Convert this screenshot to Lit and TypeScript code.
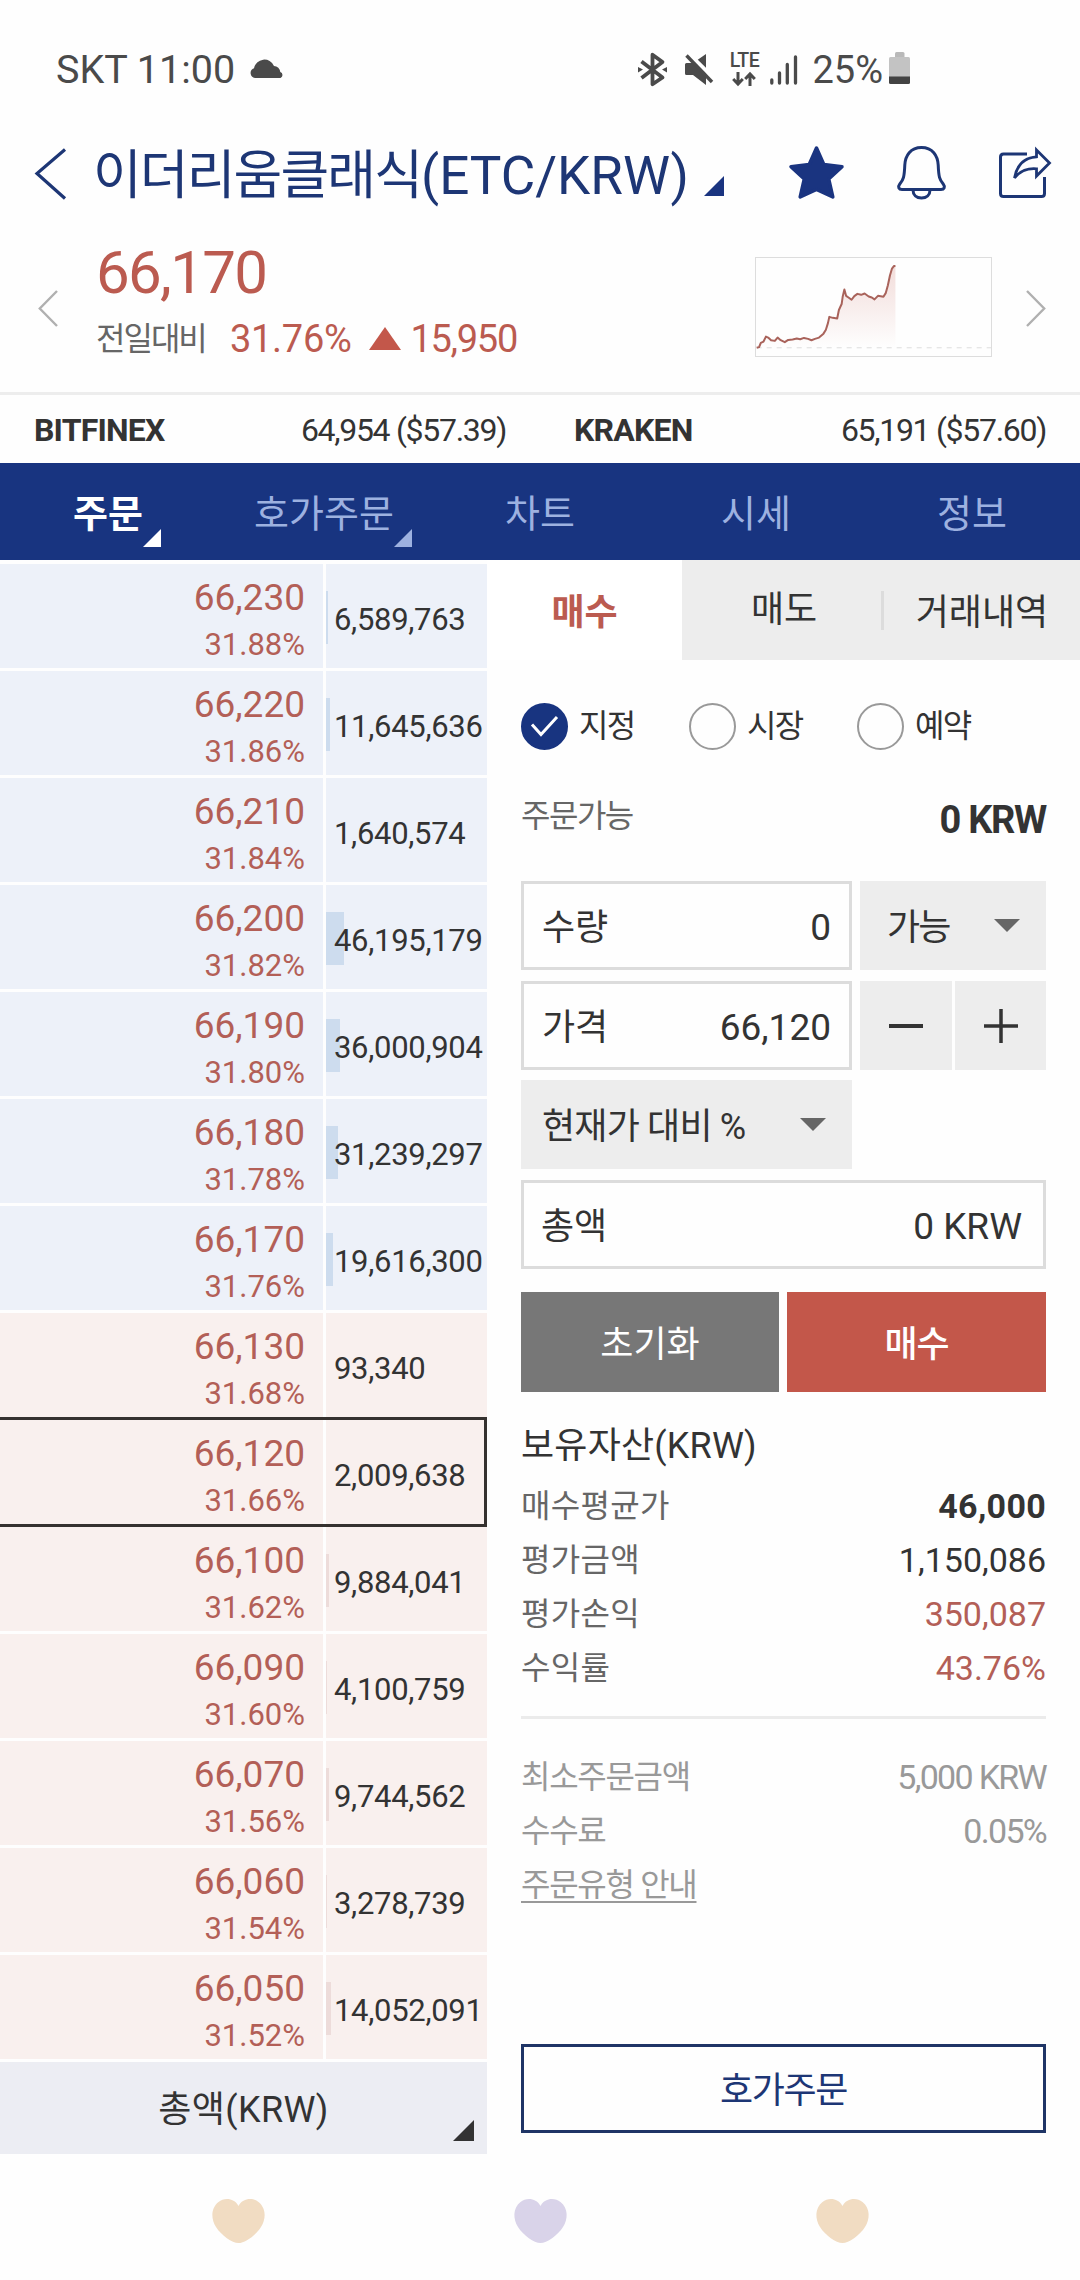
import { LitElement, html, css, svg } from "lit";
import { customElement, property, state } from "lit/decorators.js";
import { classMap } from "lit/directives/class-map.js";
import { styleMap } from "lit/directives/style-map.js";

interface Level {
  price: string;
  rate: string;
  volume: string;
  side: "ask" | "bid";
}

const LEVELS: Level[] = [
  { price: "66,230", rate: "31.88%", volume: "6,589,763", side: "ask" },
  { price: "66,220", rate: "31.86%", volume: "11,645,636", side: "ask" },
  { price: "66,210", rate: "31.84%", volume: "1,640,574", side: "ask" },
  { price: "66,200", rate: "31.82%", volume: "46,195,179", side: "ask" },
  { price: "66,190", rate: "31.80%", volume: "36,000,904", side: "ask" },
  { price: "66,180", rate: "31.78%", volume: "31,239,297", side: "ask" },
  { price: "66,170", rate: "31.76%", volume: "19,616,300", side: "ask" },
  { price: "66,130", rate: "31.68%", volume: "93,340", side: "bid" },
  { price: "66,120", rate: "31.66%", volume: "2,009,638", side: "bid" },
  { price: "66,100", rate: "31.62%", volume: "9,884,041", side: "bid" },
  { price: "66,090", rate: "31.60%", volume: "4,100,759", side: "bid" },
  { price: "66,070", rate: "31.56%", volume: "9,744,562", side: "bid" },
  { price: "66,060", rate: "31.54%", volume: "3,278,739", side: "bid" },
  { price: "66,050", rate: "31.52%", volume: "14,052,091", side: "bid" },
];

const TREND: [number, number][] = [
  [2, 273], [9, 271], [14, 258], [22, 254], [29, 239], [37, 243], [44, 250], [55, 252],
  [63, 242], [72, 250], [84, 256], [94, 249], [107, 248], [119, 245], [129, 247],
  [140, 243], [152, 246], [162, 250], [172, 246], [184, 242], [197, 230], [204, 218],
  [210, 198], [214, 179], [224, 182], [237, 184], [242, 158], [250, 140], [253, 118],
  [258, 96], [263, 115], [270, 120], [279, 127], [287, 116], [296, 109], [307, 112],
  [317, 108], [329, 117], [338, 120], [346, 126], [356, 115], [372, 118], [379, 106],
  [385, 83], [391, 53], [397, 32], [403, 24], [407, 24],
];

/** Full-scale volume and the bar width, in pixels, that it maps to. */
const BAR_UNIT = 46195179 / 18;

const base = css`
  :host {
    display: block;
    box-sizing: border-box;
  }
  *,
  *::before,
  *::after {
    box-sizing: border-box;
  }
  svg {
    display: block;
    flex: none;
    overflow: visible;
  }
`;

@customElement("status-bar")
export class StatusBar extends LitElement {
  static styles = [
    base,
    css`
      :host {
        display: flex;
        align-items: center;
        justify-content: space-between;
        height: 139px;
        padding: 0 170px 0 56px;
        color: #4a4a4a;
        font-size: 39.5px;
        line-height: 60px;
        white-space: nowrap;
      }
      .side {
        display: flex;
        align-items: center;
      }
      .cloud {
        margin: -3px 0 0 15px;
      }
      .mute {
        margin-left: 18px;
      }
      .lte {
        display: flex;
        flex-direction: column;
        align-items: center;
        width: 32px;
        margin-left: 15px;
        font-size: 19.5px;
        font-weight: 500;
        line-height: 16px;
        letter-spacing: -0.6px;
        gap: 3px;
      }
      .signal {
        margin-left: 10px;
      }
      .level {
        margin-left: 14px;
        font-size: 38px;
      }
      .battery {
        margin-left: 6px;
        margin-top: -3px;
      }
    `,
  ];

  render() {
    return html`
      <div class="side">
        <span>SKT 11:00</span>
        <svg class="cloud" width="34" height="19" viewBox="0 0 34 19" fill="currentColor">
          <path d="M5 19a5 5 0 0 1-1-9.7A10.5 10.5 0 0 1 24 7a6.5 6.5 0 0 1 6.3 6A3.2 3.2 0 0 1 30.500 19Z" />
        </svg>
      </div>
      <div class="side">
        <svg width="29" height="33" viewBox="0 0 29 33" fill="none" stroke="currentColor" stroke-width="3.8">
          <path d="M3.500 8.500L24.500 24.500L14.500 31.300V1.700L24.500 9L3.500 25" stroke-linejoin="round" />
          <path d="M0 14L5 16.500L0 19.500ZM29 14L24 16.500L29 19.500Z" fill="currentColor" stroke="none" />
        </svg>
        <svg class="mute" width="28" height="31" viewBox="0 0 28 31">
          <path d="M1.500 9H8L21 0V31L8 21H1.500Q0 21 0 19.500V10.500Q0 9 1.500 9Z" fill="currentColor" />
          <path d="M2 -2L30.500 26" stroke="#fff" stroke-width="4" />
          <path d="M1.500 1.500L27 28" stroke="currentColor" stroke-width="3.400" />
        </svg>
        <div class="lte">
          <span>LTE</span>
          <svg width="24" height="14" viewBox="0 0 24 14" fill="none" stroke="currentColor" stroke-width="3">
            <path d="M6 0V12M1.200 7L6 12L10.800 7M18 14V2M13.200 7L18 2L22.800 7" />
          </svg>
        </div>
        <svg class="signal" width="28" height="30" viewBox="0 0 28 30" stroke="currentColor" stroke-width="3.3" stroke-linecap="round">
          <path d="M1.800 25V28M9.500 18V28M17.300 9.500V28M25.500 2V28" />
        </svg>
        <span class="level">25%</span>
        <svg class="battery" width="21" height="32" viewBox="0 0 21 32">
          <path d="M6 1.500Q6 0 7.500 0H14Q15.500 0 15.500 1.500V5H6Z" fill="#b9b9b9" />
          <path d="M0 6.500Q0 5 1.500 5H19.500Q21 5 21 6.500V25H0Z" fill="#c3c3c3" />
          <path d="M0 24.500H21V30.500Q21 32 19.500 32H1.500Q0 32 0 30.500Z" fill="#434343" />
        </svg>
      </div>
    `;
  }
}

@customElement("market-header")
export class MarketHeader extends LitElement {
  static styles = [
    base,
    css`
      .titlebar {
        display: flex;
        align-items: center;
        height: 74px;
        padding: 0 28px 0 34px;
        color: #1d3675;
      }
      .back {
        margin-top: -4px;
      }
      .title {
        display: flex;
        margin: 0 0 0 27px;
        font-size: 53px;
        font-weight: 400;
        line-height: 74px;
        white-space: nowrap;
      }
      .name {
        letter-spacing: -1.9px;
      }
      .corner {
        margin: 20px 0 0 15px;
        color: #1a3480;
      }
      .actions {
        display: flex;
        align-items: center;
        margin-left: auto;
        gap: 53px;
        margin-top: -7px;
      }
      .star {
        color: #1a3480;
      }
      .quote {
        display: flex;
        align-items: center;
        height: 179px;
        padding: 0 34px 0 38px;
        white-space: nowrap;
      }
      .arrow {
        margin-top: 11px;
      }
      .figures {
        margin-left: 38px;
        color: #bb5b50;
      }
      .last {
        font-size: 60px;
        line-height: 72px;
        letter-spacing: -1.7px;
      }
      .change {
        display: flex;
        align-items: center;
        font-size: 38px;
        line-height: 60px;
      }
      .label {
        width: 134px;
        color: #666;
        font-size: 32px;
        letter-spacing: -2px;
      }
      .rate {
        letter-spacing: -0.3px;
      }
      .up {
        margin: 0 9px 0 18px;
        color: #c3574a;
      }
      .diff {
        letter-spacing: -1.3px;
      }
      .chart {
        width: 237px;
        height: 100px;
        margin: 9px 34px 0 auto;
        border: 1px solid #ddd;
      }
      .exchanges {
        display: grid;
        grid-template-columns: 1fr 1fr;
        height: 71px;
        border-top: 3px solid #ededed;
        padding-top: 1px;
        color: #333;
        font-size: 32px;
        line-height: 68px;
      }
      .exchange {
        display: flex;
        justify-content: space-between;
        padding: 0 34px 0 34px;
        white-space: nowrap;
      }
      .exchange b {
        letter-spacing: -0.8px;
      }
      .exchange span {
        letter-spacing: -1.3px;
      }
    `,
  ];

  render() {
    const line = TREND.map((p) => p.join(" ")).join("L");
    return html`
      <header class="titlebar">
        <svg class="back" width="32" height="52" viewBox="0 0 32 52" fill="none" stroke="currentColor" stroke-width="3.200">
          <path d="M31 1.500L3 25.500L31 50.500" />
        </svg>
        <h1 class="title"><span class="name">이더리움클래식</span><span>(ETC/KRW)</span></h1>
        <svg class="corner" width="20" height="20" viewBox="0 0 20 20"><path d="M20 0V20H0Z" fill="currentColor" /></svg>
        <div class="actions">
          <svg class="star" width="55" height="53" viewBox="0 0 55 53" fill="currentColor" stroke="currentColor" stroke-width="3.500" stroke-linejoin="round">
            <path d="M27.500 2L34.800 18.500L53 20.700L39.700 33L43.800 51L27.500 43.300L11.200 51L15.300 33L2 20.700L20.200 18.500Z" />
          </svg>
          <svg width="49" height="54" viewBox="0 0 49 54" fill="none" stroke="currentColor" stroke-width="3">
            <path d="M24.500 1.500C13.500 1.500 8.300 9.500 7.800 19C7.300 31 6.500 33.500 2.800 38C0.500 41 1.800 43.500 5 43.500H44C47.200 43.500 48.500 41 46.200 38C42.500 33.500 41.700 31 41.200 19C40.700 9.500 35.500 1.500 24.500 1.500Z" />
            <path d="M16 44C16 49 19.500 52 24.500 52S33 49 33 44" />
          </svg>
          <svg width="53" height="51" viewBox="0 0 53 51" fill="none" stroke="currentColor" stroke-width="3">
            <path d="M28 7H4.500Q1.500 7 1.500 10V46.500Q1.500 49.500 4.500 49.500H42.500Q45.500 49.500 45.500 46.500V30" />
            <path d="M37.500 3L50.500 16L37.500 29V21.800C28 21 21 24 15.500 31C18 18 25 10.500 37.500 9.800Z" stroke-width="2.800" />
          </svg>
        </div>
      </header>
      <section class="quote">
        <svg class="arrow" width="20" height="37" viewBox="0 0 20 37" fill="none" stroke="#b0b0b0" stroke-width="2.400">
          <path d="M19 1L1.800 18.500L19 36" />
        </svg>
        <div class="figures">
          <div class="last">66,170</div>
          <div class="change">
            <span class="label">전일대비</span><span class="rate">31.76%</span>
            <svg class="up" width="32" height="23" viewBox="0 0 32 23"><path d="M16 0L32 23H0Z" fill="currentColor" /></svg>
            <span class="diff">15,950</span>
          </div>
        </div>
        <svg class="chart" viewBox="0 0 686 298" preserveAspectRatio="none">
          <defs>
            <linearGradient id="fade" x1="0" y1="0" x2="0" y2="1">
              <stop offset="0" stop-color="#c3574a" stop-opacity="0.2" />
              <stop offset="1" stop-color="#c3574a" stop-opacity="0" />
            </linearGradient>
          </defs>
          <path d="M${line}V273H2Z" fill="url(#fade)" />
          <path d="M2 273H686" stroke="#ddd" stroke-dasharray="5 5" vector-effect="non-scaling-stroke" />
          <path d="M${line}" fill="none" stroke="#a9635b" stroke-width="2" vector-effect="non-scaling-stroke" stroke-linejoin="round" />
        </svg>
        <svg class="arrow" width="20" height="37" viewBox="0 0 20 37" fill="none" stroke="#b0b0b0" stroke-width="2.400">
          <path d="M1 1L18.200 18.500L1 36" />
        </svg>
      </section>
      <section class="exchanges">
        <div class="exchange"><b>BITFINEX</b><span>64,954 ($57.39)</span></div>
        <div class="exchange"><b>KRAKEN</b><span>65,191 ($57.60)</span></div>
      </section>
    `;
  }
}

@customElement("main-tabs")
export class MainTabs extends LitElement {
  static styles = [
    base,
    css`
      :host {
        display: grid;
        grid-template-columns: repeat(5, 1fr);
        grid-template-rows: 97px;
        height: 97px;
        background: #183480;
        color: #9db1e0;
        font-size: 38px;
        line-height: 102px;
        text-align: center;
      }
      .tab {
        display: flex;
        justify-content: center;
      }
      .active {
        color: #fff;
        font-weight: 700;
      }
      .corner {
        width: 18px;
        margin: 66px -18px 0 0;
      }
    `,
  ];

  @state() private active = 0;

  render() {
    const tabs = ["주문", "호가주문", "차트", "시세", "정보"];
    return tabs.map(
      (name, i) => html`
        <div class=${classMap({ tab: true, active: i === this.active })} @click=${() => (this.active = i)}>
          <span>${name}</span>
          ${i < 2
            ? html`<svg class="corner" width="18" height="18" viewBox="0 0 18 18"><path d="M18 0V18H0Z" fill="currentColor" /></svg>`
            : null}
        </div>
      `,
    );
  }
}

@customElement("book-row")
export class BookRow extends LitElement {
  static styles = [
    base,
    css`
      :host {
        display: block;
        height: 107px;
      }
      .row {
        position: relative;
        display: grid;
        grid-template-columns: 323px 161px;
        column-gap: 3px;
        height: 104px;
      }
      .ask {
        --cell: #edf1f9;
        --bar: #cddcee;
      }
      .bid {
        --cell: #f9f0ee;
        --bar: #eddcda;
      }
      .quote {
        padding: 10px 18px 0 0;
        background: var(--cell);
        color: #b35f57;
        font-size: 37px;
        line-height: 47px;
        text-align: right;
      }
      .rate {
        font-size: 31px;
      }
      .volume {
        display: grid;
        align-items: center;
        background: var(--cell);
        color: #333;
        font-size: 31px;
        letter-spacing: -0.3px;
        line-height: 48px;
      }
      .bar,
      .amount {
        grid-area: 1 / 1;
      }
      .bar {
        height: 53px;
        margin-top: 3px;
        background: var(--bar);
      }
      .amount {
        padding: 7px 0 0 8px;
        white-space: nowrap;
      }
      .selected::after {
        content: "";
        position: absolute;
        inset: -3px 0;
        border: 3px solid #35312f;
        border-left: none;
      }
    `,
  ];

  @property({ attribute: false }) level!: Level;
  @property({ type: Boolean }) selected = false;

  render() {
    const { price, rate, volume, side } = this.level;
    const width = Math.floor(Number(volume.replaceAll(",", "")) / BAR_UNIT + 0.001);
    return html`
      <div class=${classMap({ row: true, [side]: true, selected: this.selected })}>
        <div class="quote">
          <div>${price}</div>
          <div class="rate">${rate}</div>
        </div>
        <div class="volume">
          <div class="bar" style=${styleMap({ width: `${width}px` })}></div>
          <span class="amount">${volume}</span>
        </div>
      </div>
    `;
  }
}

@customElement("order-book")
export class OrderBook extends LitElement {
  static styles = [
    base,
    css`
      :host {
        width: 487px;
        padding-top: 4px;
      }
      .unit {
        display: grid;
        grid-template-rows: 92px;
        height: 92px;
        background: #ecedf3;
        color: #333;
        font-size: 36px;
        letter-spacing: 0.4px;
        line-height: 96px;
        text-align: center;
      }
      .unit > * {
        grid-area: 1 / 1;
      }
      .corner {
        align-self: end;
        justify-self: end;
        margin: 0 13px 13px 0;
      }
    `,
  ];

  @property() selected = "66,120";

  render() {
    return html`
      ${LEVELS.map((l) => html`<book-row .level=${l} ?selected=${l.price === this.selected}></book-row>`)}
      <div class="unit">
        <span>총액(KRW)</span>
        <svg class="corner" width="21" height="21" viewBox="0 0 21 21"><path d="M21 0V21H0Z" fill="#333" /></svg>
      </div>
    `;
  }
}

@customElement("order-form")
export class OrderForm extends LitElement {
  static styles = [
    base,
    css`
      :host {
        display: flex;
        flex-direction: column;
        width: 593px;
        color: #333;
        white-space: nowrap;
      }
      .tabs {
        display: grid;
        grid-template-columns: 195px 202px 196px;
        grid-template-rows: 100px;
        height: 100px;
        background: #ededed;
        font-size: 36px;
        line-height: 106px;
        text-align: center;
      }
      .buy {
        background: #fff;
        color: #bb5b50;
        font-weight: 700;
      }
      .sell {
        display: flex;
        align-items: center;
        justify-content: space-between;
      }
      .sell::before {
        content: "";
        width: 3px;
      }
      .sell::after {
        content: "";
        width: 3px;
        height: 39px;
        background: #dcdcdc;
      }
      .sell span {
        padding-left: 2px;
      }
      .body {
        display: flex;
        flex-direction: column;
        flex: 1;
        padding: 42px 34px 21px;
      }
      .kinds {
        display: grid;
        grid-template-columns: repeat(3, 168px);
        height: 47px;
      }
      .kind {
        display: flex;
        align-items: center;
        gap: 11px;
        font-size: 32px;
        letter-spacing: -1.6px;
        line-height: 49px;
      }
      .dot {
        display: grid;
        place-items: center;
        width: 47px;
        height: 47px;
        border: 2px solid #999;
        border-radius: 50%;
      }
      .dot.on {
        border-color: #183480;
        background: #183480;
      }
      .available {
        display: flex;
        justify-content: space-between;
        height: 132px;
        color: #666;
        font-size: 32px;
        line-height: 134px;
        letter-spacing: -1.5px;
      }
      .available b {
        color: #333;
        font-size: 38px;
        letter-spacing: -1.3px;
        line-height: 142px;
      }
      .fields {
        display: grid;
        grid-template-columns: 331px 186px;
        grid-auto-rows: 89px;
        gap: 10.7px 8px;
        font-size: 37px;
      }
      .field {
        display: flex;
        justify-content: space-between;
        padding: 0 18px 0 18px;
        border: 3px solid #dcdcdc;
        line-height: 88px;
      }
      .field > span:first-child {
        font-size: 36px;
      }
      .wide {
        grid-column: 1 / -1;
        padding: 0 21px 0 17px;
      }
      .select {
        display: flex;
        align-items: center;
        justify-content: space-between;
        padding: 0 26px 0 27px;
        background: #ededed;
        font-size: 36px;
        letter-spacing: -1.8px;
        line-height: 50px;
      }
      .select span {
        padding-top: 5px;
      }
      .percent {
        grid-column: 1;
        padding-left: 21px;
        letter-spacing: -0.8px;
      }
      .steps {
        display: grid;
        grid-template-columns: 92px 91px;
        gap: 3px;
      }
      .step {
        display: grid;
        place-items: center;
        padding-top: 1px;
        background: #ededed;
      }
      .buttons {
        display: grid;
        grid-template-columns: 258px 259px;
        grid-template-rows: 100px;
        gap: 8px;
        height: 100px;
        margin-top: 23px;
        color: #fff;
        font-size: 36px;
        line-height: 106px;
        text-align: center;
      }
      .reset {
        background: #777;
      }
      .submit {
        background: #c3574a;
        letter-spacing: -1px;
        font-weight: 500;
      }
      .heading {
        margin: 26px 0 0;
        font-size: 36px;
        font-weight: 400;
        letter-spacing: 0.2px;
        line-height: 56px;
      }
      .line {
        display: flex;
        justify-content: space-between;
        height: 54px;
        line-height: 54px;
        font-size: 34px;
      }
      .line > span:first-child {
        color: #666;
        font-size: 32px;
        letter-spacing: 0.3px;
      }
      .line b {
        letter-spacing: 0.3px;
      }
      .assets {
        padding: 5px 0 21px;
        border-bottom: 3px solid #ebebeb;
      }
      .red {
        color: #b35f57;
      }
      .notes {
        padding-top: 31px;
      }
      .notes .line {
        color: #999;
        letter-spacing: -1.7px;
      }
      .notes .line > span:first-child {
        color: #999;
        letter-spacing: -1.3px;
      }
      .notes .line > .link:first-child {
        text-decoration: underline;
        text-decoration-thickness: 2px;
        text-underline-offset: 5px;
        text-decoration-skip-ink: none;
      }
      .outline {
        height: 89px;
        margin-top: auto;
        border: 3px solid #1f3566;
        color: #1d3675;
        font-size: 36px;
        letter-spacing: -1.4px;
        line-height: 89px;
        text-align: center;
      }
    `,
  ];

  @state() private kind = 0;

  private caret() {
    return svg`<svg width="26" height="13" viewBox="0 0 26 13"><path d="M0 0H26L13 13Z" fill="#666" /></svg>`;
  }

  render() {
    return html`
      <div class="tabs">
        <div class="buy">매수</div>
        <div class="sell"><span>매도</span></div>
        <div>거래내역</div>
      </div>
      <div class="body">
        <div class="kinds">
          ${["지정", "시장", "예약"].map(
            (name, i) => html`
              <div class="kind" @click=${() => (this.kind = i)}>
                <span class=${classMap({ dot: true, on: i === this.kind })}>
                  ${i === this.kind
                    ? html`<svg width="27" height="21" viewBox="0 0 27 21" fill="none" stroke="#fff" stroke-width="3"><path d="M1 8.500L10 18.500L26 1" /></svg>`
                    : null}
                </span>
                <span>${name}</span>
              </div>
            `,
          )}
        </div>
        <div class="available"><span>주문가능</span><b>0 KRW</b></div>
        <div class="fields">
          <div class="field"><span>수량</span><span>0</span></div>
          <div class="select"><span>가능</span>${this.caret()}</div>
          <div class="field"><span>가격</span><span>66,120</span></div>
          <div class="steps">
            <div class="step">
              <svg width="34" height="34" viewBox="0 0 34 34" stroke="#333" stroke-width="4"><path d="M0 17H34" /></svg>
            </div>
            <div class="step">
              <svg width="34" height="34" viewBox="0 0 34 34" stroke="#333" stroke-width="3.500"><path d="M0 17H34M17 0V34" /></svg>
            </div>
          </div>
          <div class="select percent"><span>현재가 대비 %</span>${this.caret()}</div>
          <div class="field wide"><span>총액</span><span>0 KRW</span></div>
        </div>
        <div class="buttons">
          <div class="reset">초기화</div>
          <div class="submit">매수</div>
        </div>
        <h2 class="heading">보유자산(KRW)</h2>
        <div class="assets">
          <div class="line"><span>매수평균가</span><b>46,000</b></div>
          <div class="line"><span>평가금액</span><span>1,150,086</span></div>
          <div class="line"><span>평가손익</span><span class="red">350,087</span></div>
          <div class="line"><span>수익률</span><span class="red">43.76%</span></div>
        </div>
        <div class="notes">
          <div class="line"><span>최소주문금액</span><span>5,000 KRW</span></div>
          <div class="line"><span>수수료</span><span>0.05%</span></div>
          <div class="line"><span class="link">주문유형 안내</span></div>
        </div>
        <div class="outline">호가주문</div>
      </div>
    `;
  }
}

@customElement("app-root")
export class AppRoot extends LitElement {
  static styles = [
    base,
    css`
      :host {
        display: flex;
        flex-direction: column;
        width: 1080px;
        height: 2280px;
        overflow: hidden;
        background: #fefefe;
        font-family: Roboto, "Noto Sans CJK KR", sans-serif;
      }
      .trade {
        display: flex;
        height: 1594px;
      }
      .keys {
        display: flex;
        justify-content: center;
        gap: 249px;
        padding-top: 45px;
      }
    `,
  ];

  render() {
    return html`
      <status-bar></status-bar>
      <market-header></market-header>
      <main-tabs></main-tabs>
      <div class="trade">
        <order-book></order-book>
        <order-form></order-form>
      </div>
      <nav class="keys">
        ${["#f1dcc2", "#d9d3e9", "#f1dcc2"].map(
          (color) => html`
            <svg width="53" height="44" viewBox="0 0 53 44">
              <path d="M26.500 7C22 -1.500 12 -1.500 6.500 3C-1.500 9.500 -1 20 4 28C9.500 36.500 20 44 26.500 44S43.500 36.500 49 28C54 20 54.500 9.500 46.500 3C41 -1.500 31 -1.500 26.500 7Z" fill=${color} />
            </svg>
          `,
        )}
      </nav>
    `;
  }
}
